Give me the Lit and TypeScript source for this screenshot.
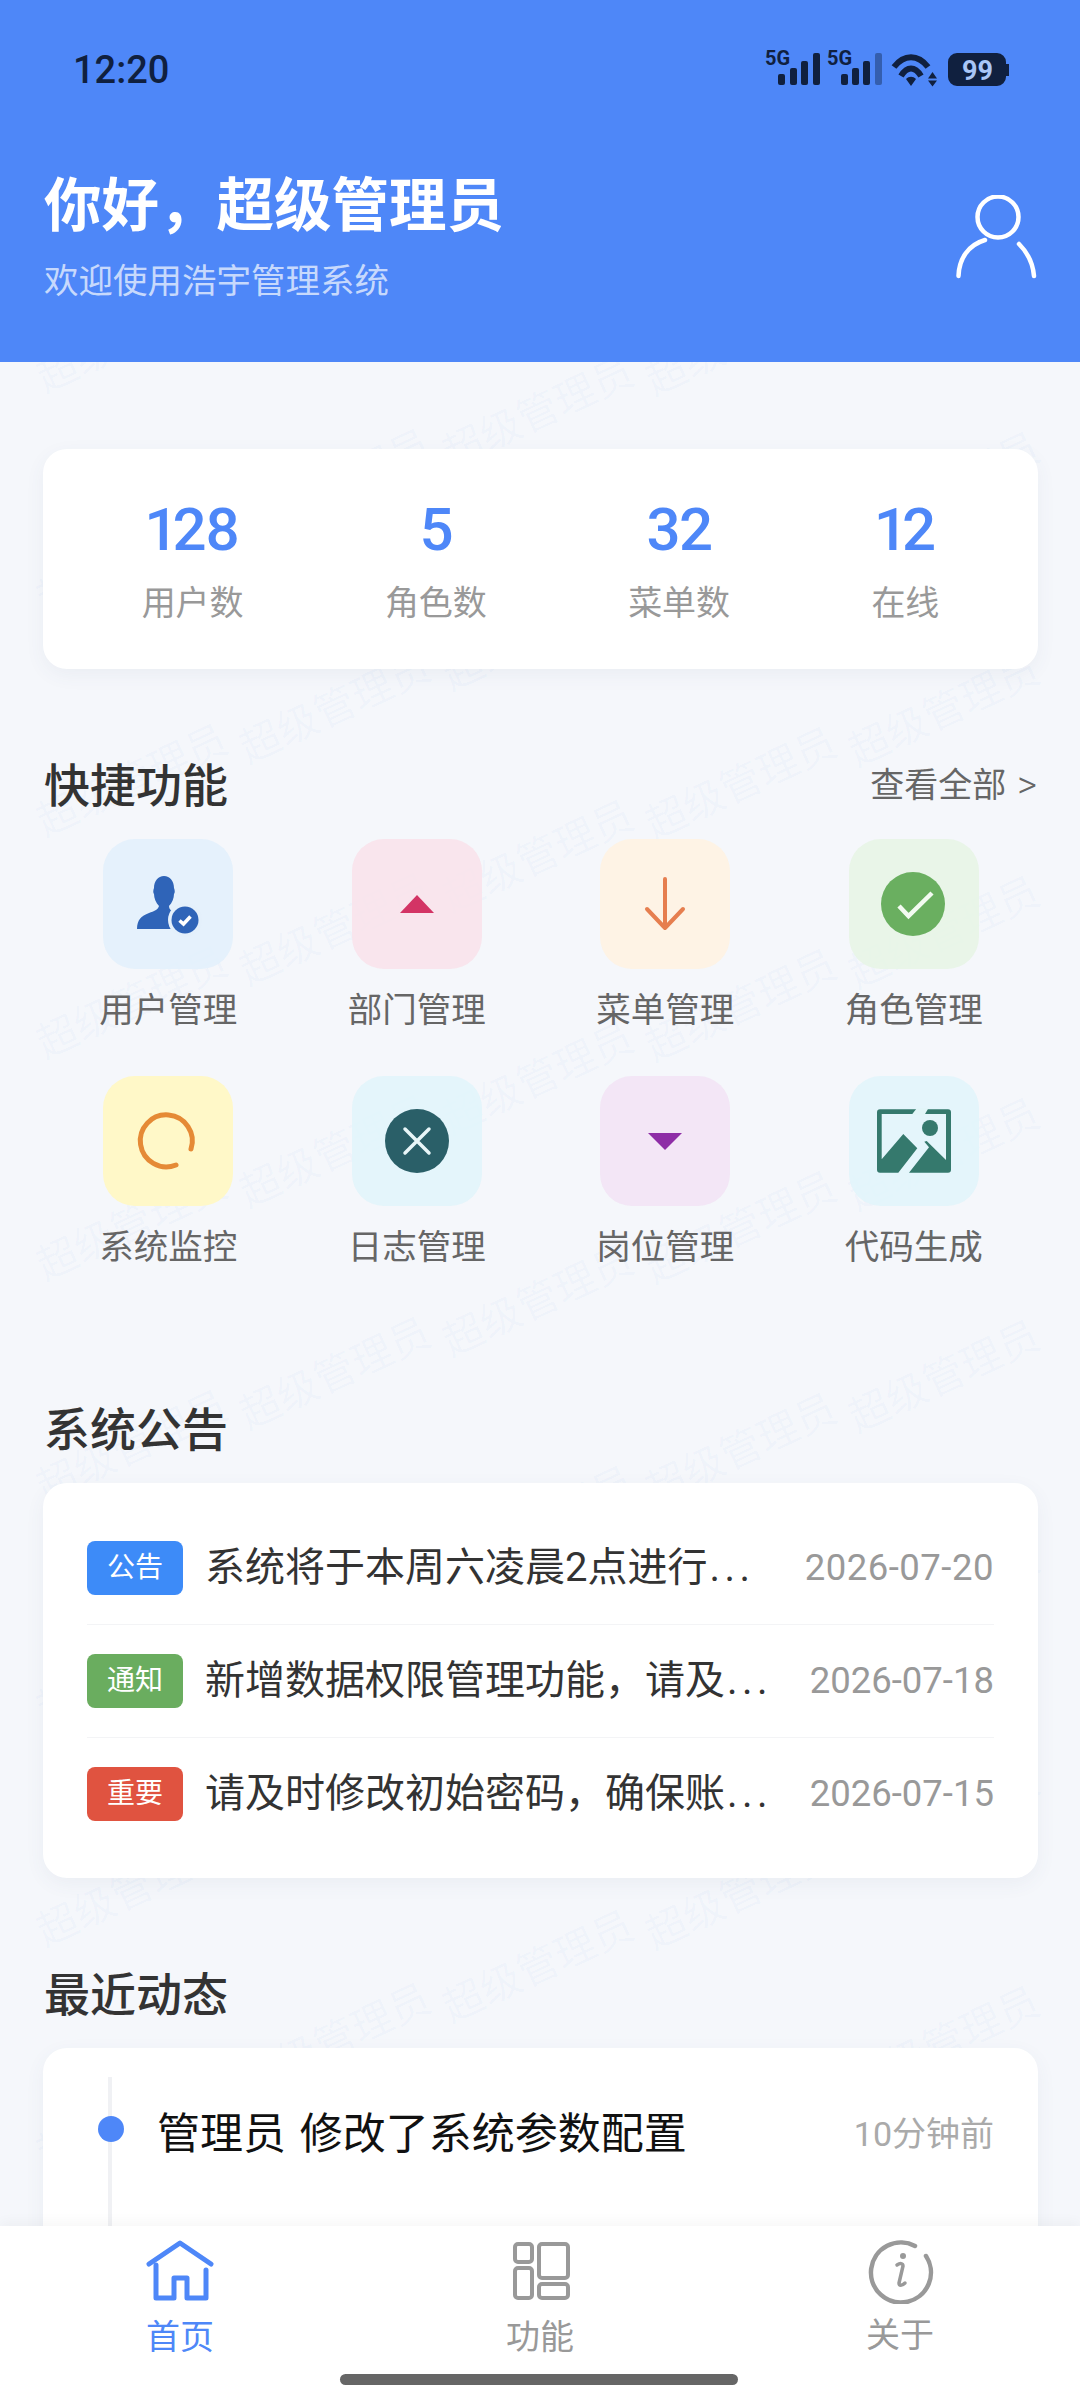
import { LitElement, html, css, svg } from "lit";
import { customElement } from "lit/decorators.js";

const ICONS: Record<string, unknown> = {
  user: svg`<path fill="#2f64b8" d="M34 90c0-9 4-13 12-16 5-2 9-3 10-7-3-3-5-8-5-12-1-1-1-4 0-6 0-7 4-12 10-12s10 5 10 12c1 2 1 5 0 6 0 4-2 9-5 12 0 2 1 4 3 5v18H34z"/><circle cx="82" cy="81" r="17" fill="#e4f0fb"/><circle cx="82" cy="81" r="13.5" fill="#2f64b8"/><path d="M76.500 81.500l4 3.500 7-7.500" fill="none" stroke="#fff" stroke-width="3.500"/>`,
  up: svg`<path fill="#d33465" d="M65 56l17 18H48z"/>`,
  down: svg`<path fill="none" stroke="#e67e4f" stroke-width="4" stroke-linecap="round" stroke-linejoin="round" d="M65 40v49M47 70l18 19 18-19"/>`,
  check: svg`<circle cx="64" cy="65" r="32" fill="#6aaf60"/><path d="M50 67l9.500 10L83 54" fill="none" stroke="#f3fbf1" stroke-width="4.500"/>`,
  spin: svg`<path fill="none" stroke="#e58a36" stroke-width="5" stroke-linecap="round" d="M88 73A26 26 0 1 0 73 89"/>`,
  close: svg`<circle cx="65" cy="65" r="32" fill="#2a5f68"/><path d="M53 53l24 24M77 53L53 77" fill="none" stroke="#e8f6f8" stroke-width="3.500" stroke-linecap="round"/>`,
  tri: svg`<path fill="#8e2da6" d="M48 57h34L65 74z"/>`,
  image: svg`<path fill="#35796d" fill-rule="evenodd" d="M31 33.300h68a3 3 0 0 1 3 3v57.400a3 3 0 0 1-3 3H31a3 3 0 0 1-3-3V36.300a3 3 0 0 1 3-3zM32.700 38v45.300L54.300 58l14 14.300L49.300 96.700H60l20-25.400-4.700-5.600 2.400-.7L97 84V38z"/><path fill="#e2f5f8" d="M68 32h11.500l-4 7H62.500z"/><circle cx="81" cy="52" r="8" fill="#35796d"/>`,
};

const GRID = [
  ["用户管理", "user", "t-blue"],
  ["部门管理", "up", "t-pink"],
  ["菜单管理", "down", "t-orange"],
  ["角色管理", "check", "t-green"],
  ["系统监控", "spin", "t-yellow"],
  ["日志管理", "close", "t-cyan"],
  ["岗位管理", "tri", "t-purple"],
  ["代码生成", "image", "t-cyan"],
];

const STATS = [
  ["128", "用户数"],
  ["5", "角色数"],
  ["32", "菜单数"],
  ["12", "在线"],
];

const NOTICES = [
  ["公告", "tag-blue", "系统将于本周六凌晨2点进行", "2026-07-20", "wide"],
  ["通知", "tag-green", "新增数据权限管理功能，请及", "2026-07-18", ""],
  ["重要", "tag-red", "请及时修改初始密码，确保账", "2026-07-15", ""],
];

function marks() {
  const out: { x: number; y: number }[] = [];
  for (let col = 0; col < 5; col++) {
    const x = 48 + 203 * col;
    let y = 843 - 73 * col;
    while (y > 362) y -= 222;
    for (; y < 2300; y += 222) out.push({ x, y });
  }
  return out;
}

@customElement("app-root")
export class AppRoot extends LitElement {
  static styles = css`
    :host {
      display: block;
      position: relative;
      width: 1080px;
      height: 2400px;
      overflow: hidden;
      background: #f5f7fb;
      font-family: Roboto, "Noto Sans CJK SC", sans-serif;
      color: #333;
    }
    .page { display: flex; flex-direction: column; height: 2400px; position: relative; }
    .watermark { position: absolute; inset: 0; overflow: hidden; pointer-events: none; }
    .mark {
      position: absolute;
      font-size: 41px;
      line-height: 42px;
      white-space: nowrap;
      color: rgba(70, 125, 220, 0.036);
      transform-origin: 0 100%;
      transform: rotate(-25deg);
    }
    .header { background: #4e87f8; height: 362px; flex: none; position: relative; color: #fff; }
    .status {
      display: flex;
      justify-content: space-between;
      align-items: center;
      height: 56px;
      padding: 42px 71px 0 73px;
      color: #10203f;
    }
    .time { font-size: 38px; font-weight: 500; line-height: 56px; }
    .status svg { display: block; }
    .hello { display: flex; justify-content: space-between; padding: 74px 41px 0 44px; }
    .h-title { font-size: 57.500px; font-weight: 600; line-height: 70px; }
    .h-sub { font-size: 34.500px; line-height: 50px; margin-top: 14px; color: rgba(255, 255, 255, 0.7); }
    .avatar { display: block; margin-top: 23px; }
    .main { flex: 1; min-height: 0; overflow: hidden; padding: 87px 42px 0 43px; position: relative; }
    .card { background: #fff; border-radius: 24px; box-shadow: 0 6px 20px rgba(60, 80, 120, 0.06); }
    .stats {
      display: flex;
      justify-content: space-around;
      height: 220px;
      padding: 3px 28px 0;
      box-sizing: border-box;
      align-items: center;
    }
    .stat { text-align: center; }
    .num { font-size: 60px; font-weight: 500; line-height: 72px; color: #4e87f8; letter-spacing: -1.500px; font-feature-settings: "pnum"; }
    .lab { font-size: 34px; line-height: 48px; margin-top: 13px; color: #999; }
    .sec-head {
      display: flex;
      justify-content: space-between;
      align-items: center;
      height: 60px;
      margin-top: 84px;
      margin-bottom: 26px;
    }
    .sec-title { font-size: 46px; font-weight: 500; line-height: 54px; padding-top: 6px; color: #333; margin-left: 1px; }
    .more { font-size: 34px; color: #666; line-height: 48px; padding-top: 4px; display: flex; align-items: center; }
    .chev { font-size: 38px; font-weight: 300; margin-left: 11px; margin-right: 1px; }
    .grid { display: grid; grid-template-columns: repeat(4, 1fr); row-gap: 44px; margin-left: 1px; }
    .tile { display: flex; flex-direction: column; align-items: center; }
    .tile-ic { width: 130px; height: 130px; border-radius: 32px; }
    .tile-ic svg { display: block; }
    .tile-label { font-size: 34.500px; line-height: 48px; margin-top: 17px; color: #666; white-space: nowrap; height: 46px; }
    .t-blue { background: rgba(226, 240, 251, 0.85); }
    .t-pink { background: rgba(249, 226, 234, 0.85); }
    .t-orange { background: rgba(255, 242, 224, 0.85); }
    .t-green { background: rgba(230, 245, 228, 0.85); }
    .t-yellow { background: #fff8c8; }
    .t-cyan { background: rgba(224, 245, 250, 0.85); }
    .t-purple { background: rgba(242, 227, 245, 0.85); }
    .s2 { margin-top: 128px; }
    .s3 { margin-top: 84px; margin-bottom: 26px; }
    .notices { padding: 29px 44px 28px 44px; }
    .notice {
      display: flex;
      align-items: center;
      height: 112px;
      border-bottom: 1.500px solid #f3f4f6;
    }
    .notice:last-child { border-bottom: none; }
    .tag {
      flex: none;
      width: 96px;
      height: 54px;
      border-radius: 8px;
      color: #fff;
      font-size: 28px;
      line-height: 54px;
      text-align: center;
    }
    .tag-blue { background: #3d8bf8; }
    .tag-green { background: #6aad5f; }
    .tag-red { background: #e05340; }
    .n-text { flex: 1; min-width: 0; margin-left: 22px; font-size: 40px; line-height: 56px; color: #333; white-space: nowrap; overflow: hidden; }
    .dots { letter-spacing: 4.500px; margin-left: 2px; }
    .n-date { flex: none; font-size: 36.500px; color: #999; line-height: 50px; }
    .wide { letter-spacing: 0.500px; }
    .activity { padding: 29px 44px 0 65px; height: 400px; box-sizing: border-box; position: relative; }
    .rail { position: absolute; left: 65px; top: 29px; bottom: 0; width: 4px; background: #f0f1f4; }
    .dot { position: absolute; left: 55px; top: 68px; width: 26px; height: 26px; border-radius: 50%; background: #4e87f8; }
    .act { display: flex; justify-content: space-between; align-items: center; padding-left: 49px; height: 100px; margin-top: 7px; }
    .act-text { font-size: 43px; color: #111; line-height: 60px; white-space: pre; word-spacing: 3px; }
    .act-time { font-size: 34px; color: #aaa; line-height: 48px; }
    .tabbar {
      flex: none;
      height: 174px;
      background: #fff;
      position: relative;
      display: grid;
      grid-template-columns: repeat(3, 360px);
      box-shadow: 0 -4px 12px rgba(0, 0, 0, 0.035);
    }
    .tab { display: flex; flex-direction: column; align-items: center; color: #999; }
    .tab svg { display: block; margin-top: 14px; }
    .tab-label { font-size: 34px; line-height: 44px; margin-top: 13px; }
    .on { color: #4e87f8; }
    .indicator { position: absolute; left: 340px; top: 148px; width: 398px; height: 11px; border-radius: 6px; background: #666; }
  `;

  render() {
    return html`
      <div class="watermark">
        ${marks().map(
          (m) => html`<span class="mark" style="left:${m.x}px;top:${m.y - 42}px">超级管理员</span>`
        )}
      </div>
      <div class="page">
        <div class="header">
          <div class="status">
            <span class="time">12:20</span>
            <svg width="244" height="56" viewBox="0 -7 244 56">
              <g fill="#10203f">
                <text x="0" y="16" font-family="Roboto" font-weight="700" font-size="20">5G</text>
                <rect x="13" y="25" width="7" height="11" rx="2"/><rect x="25" y="19" width="7" height="17" rx="2"/><rect x="36" y="12" width="7" height="24" rx="2"/><rect x="48" y="4" width="7" height="32" rx="2"/>
                <text x="62" y="16" font-family="Roboto" font-weight="700" font-size="20">5G</text>
                <rect x="76" y="25" width="7" height="11" rx="2"/><rect x="87" y="19" width="7" height="17" rx="2"/><rect x="98" y="12" width="7" height="24" rx="2"/><rect x="110" y="4" width="7" height="32" rx="2" opacity=".4"/>
                <path fill="none" stroke="#10203f" stroke-width="6" d="M129 18C139 5 153 5 163 18M136 27C142 17 150 17 156 27"/>
                <path d="M141 30C144 27 148 27 151 30L146 37zM163 29.500L167.500 23 172 29.500zM163 31.500h9L167.500 37.500z"/>
                <path d="M192 4h40a9 9 0 0 1 9 9v2h3v12h-3v1a9 9 0 0 1-9 9h-40a9 9 0 0 1-9-9V13a9 9 0 0 1 9-9z"/>
                <text x="197" y="31" font-family="Roboto" font-weight="700" font-size="27" fill="#a9c6f7">99</text>
              </g>
            </svg>
          </div>
          <div class="hello">
            <div>
              <div class="h-title">你好，超级管理员</div>
              <div class="h-sub">欢迎使用浩宇管理系统</div>
            </div>
            <svg class="avatar" width="84" height="84" viewBox="0 0 84 84" fill="none" stroke="#fff" stroke-width="4.500" stroke-linecap="round">
              <circle cx="43" cy="22" r="20.500"/>
              <path d="M3.500 81C4 64 13 50 30 45M64 49c8 8 14 20 15 32"/>
            </svg>
          </div>
        </div>

        <div class="main">
          <div class="card stats">
            ${STATS.map(
              ([n, l]) => html`<div class="stat"><div class="num">${n}</div><div class="lab">${l}</div></div>`
            )}
          </div>

          <div class="sec-head">
            <span class="sec-title">快捷功能</span>
            <span class="more">查看全部<span class="chev">&gt;</span></span>
          </div>
          <div class="grid">
            ${GRID.map(
              ([label, icon, tone]) => html`<div class="tile">
                <div class="tile-ic ${tone}">
                  <svg width="130" height="130" viewBox="0 0 130 130">${ICONS[icon]}</svg>
                </div>
                <div class="tile-label">${label}</div>
              </div>`
            )}
          </div>

          <div class="sec-head s2"><span class="sec-title">系统公告</span></div>
          <div class="card notices">
            ${NOTICES.map(
              ([t, c, text, d, w]) => html`<div class="notice">
                <span class="tag ${c}">${t}</span>
                <span class="n-text">${text}<span class="dots">...</span></span>
                <span class="n-date ${w}">${d}</span>
              </div>`
            )}
          </div>

          <div class="sec-head s3"><span class="sec-title">最近动态</span></div>
          <div class="card activity">
            <div class="rail"></div>
            <div class="dot"></div>
            <div class="act">
              <span class="act-text">管理员 修改了系统参数配置</span>
              <span class="act-time">10分钟前</span>
            </div>
          </div>
        </div>

        <div class="tabbar">
          <div class="tab on">
            <svg width="68" height="62" viewBox="0 0 68 62" fill="none" stroke="#4e87f8" stroke-width="5" stroke-linecap="round" stroke-linejoin="round">
              <path d="M3 24L34 3l31 21"/>
              <path d="M10 25v33h18V38h13v20h19V30"/>
            </svg>
            <span class="tab-label">首页</span>
          </div>
          <div class="tab">
            <svg width="60" height="62" viewBox="0 0 60 62" fill="none" stroke="#999" stroke-width="4">
              <rect x="5" y="4" width="17" height="18" rx="3"/>
              <rect x="5" y="28" width="17" height="30" rx="3"/>
              <rect x="29" y="4" width="29" height="34" rx="3"/>
              <rect x="29" y="44" width="29" height="14" rx="3"/>
            </svg>
            <span class="tab-label">功能</span>
          </div>
          <div class="tab">
            <svg width="68" height="66" viewBox="0 0 68 66" fill="none" stroke="#999" stroke-width="4.500" stroke-linecap="round" style="margin-top:12px;margin-bottom:-4px">
              <path d="M49 8A30 30 0 1 0 60 18"/>
              <path d="M31 27c3-2 6-2 6 1l-4 17c0 3 3 3 6 0" stroke-width="3.500"/>
              <circle cx="37" cy="18" r="3" fill="#999" stroke="none"/>
            </svg>
            <span class="tab-label">关于</span>
          </div>
          <div class="indicator"></div>
        </div>
      </div>
    `;
  }
}
